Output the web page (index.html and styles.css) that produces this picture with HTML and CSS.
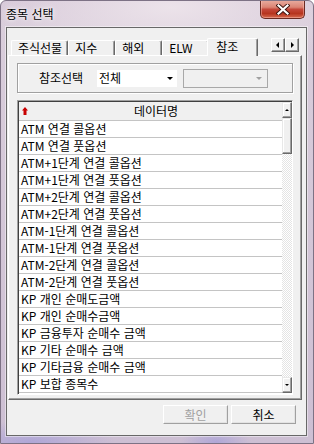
FILE: index.html
```html
<!DOCTYPE html>
<html lang="ko">
<head>
<meta charset="utf-8">
<title>종목 선택</title>
<link rel="stylesheet" href="styles.css">
</head>
<body>
<div class="window">
  <div class="titlebar">
    <span class="title">종목 선택</span>
    <div class="close">
      <svg width="14" height="11" viewBox="0 0 14 11">
        <path d="M2.5 1.5 L11.5 9.5 M11.5 1.5 L2.5 9.5" stroke="#3a1410" stroke-width="4" stroke-linecap="square" fill="none"/>
        <path d="M2.5 1.5 L11.5 9.5 M11.5 1.5 L2.5 9.5" stroke="#ffffff" stroke-width="2.2" stroke-linecap="square" fill="none"/>
      </svg>
    </div>
  </div>
  <div class="client">
    <div class="tabctl">
      <div class="tabstrip">
        <div class="tab">주식선물</div>
        <div class="tab">지수</div>
        <div class="tab">해외</div>
        <div class="tab">ELW</div>
        <div class="tab active">참조</div>
        <div class="spinner">
          <div class="spin-btn"><span class="tri-left"></span></div>
          <div class="spin-btn"><span class="tri-right"></span></div>
        </div>
      </div>
      <div class="panel">
        <div class="group">
          <span class="group-label">참조선택</span>
          <div class="combo">
            <span class="combo-text">전체</span>
            <span class="tri-down"></span>
          </div>
          <div class="combo disabled">
            <span class="combo-text"></span>
            <span class="tri-down light"></span>
          </div>
        </div>
        <div class="list">
          <div class="list-body">
            <div class="list-head">
              <span class="sort">
                <svg width="6" height="8" viewBox="0 0 6 8"><path d="M3 0 L6 3.5 L4.5 3.5 L4.5 8 L1.5 8 L1.5 3.5 L0 3.5 Z" fill="#c80000"/></svg>
              </span>
              <span class="head-text">데이터명</span>
            </div>
            <div class="row">ATM 연결 콜옵션</div>
            <div class="row">ATM 연결 풋옵션</div>
            <div class="row">ATM+1단계 연결 콜옵션</div>
            <div class="row">ATM+1단계 연결 풋옵션</div>
            <div class="row">ATM+2단계 연결 콜옵션</div>
            <div class="row">ATM+2단계 연결 풋옵션</div>
            <div class="row">ATM-1단계 연결 콜옵션</div>
            <div class="row">ATM-1단계 연결 풋옵션</div>
            <div class="row">ATM-2단계 연결 콜옵션</div>
            <div class="row">ATM-2단계 연결 풋옵션</div>
            <div class="row">KP 개인 순매도금액</div>
            <div class="row">KP 개인 순매수금액</div>
            <div class="row">KP 금융투자 순매수 금액</div>
            <div class="row">KP 기타 순매수 금액</div>
            <div class="row">KP 기타금융 순매수 금액</div>
            <div class="row">KP 보합 종목수</div>
          </div>
          <div class="scrollbar">
            <div class="sb-btn"><span class="tri-up"></span></div>
            <div class="sb-thumb"></div>
            <div class="sb-track"></div>
            <div class="sb-btn"><span class="tri-down small"></span></div>
          </div>
        </div>
      </div>
    </div>
    <div class="buttons">
      <div class="btn disabled">확인</div>
      <div class="btn">취소</div>
    </div>
  </div>
</div>
</body>
</html>
```

FILE: styles.css
```css
html, body {
  margin: 0;
  padding: 0;
  background: #ffffff;
}
body {
  font-family: "Noto Sans CJK KR", "Noto Sans", sans-serif;
  font-size: 12px;
  color: #000;
}
.window {
  width: 314px;
  height: 444px;
  box-sizing: border-box;
  display: flex;
  flex-direction: column;
  border: 1px solid #7d7285;
  border-radius: 6px 6px 0 0;
  background:
    radial-gradient(ellipse 120px 30px at 30px 441px, rgba(120,120,220,0.35), transparent 70%),
    radial-gradient(ellipse 50px 20px at 215px 441px, rgba(120,120,220,0.35), transparent 70%),
    radial-gradient(ellipse 190px 60px at 170px 6px, #ece3ea 0%, rgba(236,227,234,0) 100%),
    linear-gradient(to bottom, #d6c8d8 0%, #d9cddb 30px, #cdbfd3 100%);
  overflow: hidden;
}
.titlebar {
  height: 26px;
  display: flex;
  align-items: flex-start;
  padding-left: 5px;
  flex-shrink: 0;
}
.title {
  margin-top: 5px;
  font-size: 12px;
  line-height: 16px;
  color: #000;
  text-shadow: 0 0 6px rgba(255,255,255,0.9), 0 0 3px rgba(255,255,255,0.9);
}
.close {
  margin-left: auto;
  margin-right: 8px;
  margin-top: -1px;
  width: 45px;
  height: 19px;
  box-sizing: border-box;
  border: 1px solid #6a2a22;
  border-top: none;
  border-radius: 0 0 5px 5px;
  background: linear-gradient(to bottom, #e9aea2 0%, #db8474 40%, #c4473a 52%, #b6351f 75%, #d66a4f 100%);
  box-shadow: inset 0 0 0 1px rgba(255,200,190,0.45);
  display: flex;
  align-items: center;
  justify-content: center;
}
.close svg { display: block; }
.client {
  flex: 1;
  margin: 0 6px 7px 5px;
  border: 1px solid #686868;
  background: #f0f0f0;
  display: flex;
  flex-direction: column;
  box-shadow: 0 0 0 1px rgba(255,255,255,0.45);
}
.tabctl {
  margin: 10px 0 0 1px;
  width: 294px;
  display: flex;
  flex-direction: column;
}
.tabstrip {
  height: 17px;
  display: flex;
  align-items: flex-end;
  padding-left: 3px;
  position: relative;
  z-index: 2;
}
.tab {
  height: 15px;
  min-width: 47px;
  box-sizing: border-box;
  padding: 0 5px 0 6px;
  line-height: 14px;
  border-top: 1px solid #ffffff;
  border-left: 1px solid #ffffff;
  border-right: 1px solid #696969;
  box-shadow: inset -1px 0 #a0a0a0;
  border-radius: 2px 2px 0 0;
  background: #f0f0f0;
  white-space: nowrap;
}
.tab.active {
  height: 18px;
  margin: 0 -2px -1px -2px;
  padding: 0 7px 0 8px;
  min-width: 51px;
  line-height: 15px;
  position: relative;
  z-index: 3;
}
.spinner {
  margin-left: auto;
  margin-right: 3px;
  align-self: flex-start;
  margin-top: 0px;
  display: flex;
}
.spin-btn {
  width: 14px;
  height: 14px;
  box-sizing: border-box;
  border: 1px solid;
  border-color: #ffffff #696969 #696969 #ffffff;
  box-shadow: inset -1px -1px #a0a0a0;
  background: #f0f0f0;
  display: flex;
  align-items: center;
  justify-content: center;
}
.tri-left {
  width: 0; height: 0;
  border-top: 3px solid transparent;
  border-bottom: 3px solid transparent;
  border-right: 3px solid #000;
  margin-right: 1px;
}
.tri-right {
  width: 0; height: 0;
  border-top: 3px solid transparent;
  border-bottom: 3px solid transparent;
  border-left: 3px solid #000;
  margin-left: 1px;
}
.panel {
  height: 345px;
  box-sizing: border-box;
  border: 1px solid;
  border-color: #ffffff #696969 #696969 #ffffff;
  box-shadow: inset -1px -1px #a0a0a0;
  padding: 7px 8px 4px 8px;
  display: flex;
  flex-direction: column;
  gap: 7px;
  position: relative;
  z-index: 1;
}
.group {
  height: 30px;
  box-sizing: border-box;
  border: 1px solid #a0a0a0;
  box-shadow: 1px 1px 0 #ffffff, inset 1px 1px 0 #ffffff;
  display: flex;
  align-items: center;
  padding-left: 21px;
  flex-shrink: 0;
}
.group-label {
  width: 48px;
  margin-right: 10px;
  white-space: nowrap;
  line-height: 16px;
}
.combo {
  width: 80px;
  height: 17px;
  box-sizing: border-box;
  background: #ffffff;
  display: flex;
  align-items: center;
  padding: 0 4px 0 2px;
}
.combo-text { flex: 1; line-height: 16px; }
.combo.disabled {
  width: 85px;
  height: 19px;
  margin-left: 6px;
  border: 1px solid #a8a8a8;
  background: #f0f0f0;
  padding-right: 5px;
}
.tri-down {
  width: 0; height: 0;
  border-left: 3px solid transparent;
  border-right: 3px solid transparent;
  border-top: 3px solid #000;
}
.tri-down.light { border-top-color: #a0a0a0; }
.tri-down.small {
  border-left-width: 2px;
  border-right-width: 2px;
  border-top-width: 2px;
}
.tri-up {
  width: 0; height: 0;
  border-left: 2px solid transparent;
  border-right: 2px solid transparent;
  border-bottom: 2px solid #000;
}
.list {
  height: 295px;
  box-sizing: border-box;
  border: 1px solid;
  border-color: #a0a0a0 #ffffff #ffffff #a0a0a0;
  box-shadow: inset 1px 1px #404040;
  background: #ffffff;
  display: flex;
  padding: 1px 0 1px 1px;
  flex-shrink: 0;
}
.list-body {
  flex: 1;
  overflow: hidden;
  display: flex;
  flex-direction: column;
}
.list-head {
  height: 19px;
  flex-shrink: 0;
  box-sizing: border-box;
  border-bottom: 1px solid #c4c4c4;
  background: #f0f0f0;
  display: flex;
  align-items: center;
}
.sort {
  width: 11px;
  padding-left: 3px;
  box-sizing: border-box;
  display: flex;
  align-items: center;
  margin-top: -1px;
}
.sort svg { display: block; }
.head-text {
  flex: 1;
  text-align: center;
  line-height: 16px;
}
.row {
  height: 17px;
  flex-shrink: 0;
  box-sizing: border-box;
  border-bottom: 1px solid #c4c4c4;
  padding-left: 2px;
  line-height: 16px;
  white-space: nowrap;
}
.scrollbar {
  width: 10px;
  display: flex;
  flex-direction: column;
  flex-shrink: 0;
}
.sb-btn, .sb-thumb {
  box-sizing: border-box;
  border: 1px solid;
  border-color: #e8e8e8 #696969 #696969 #e8e8e8;
  box-shadow: inset -1px -1px #a0a0a0, inset 1px 1px #ffffff;
  background: #f0f0f0;
  display: flex;
  align-items: center;
  justify-content: center;
}
.sb-btn { height: 16px; flex-shrink: 0; }
.sb-thumb { height: 36px; flex-shrink: 0; }
.sb-track {
  flex: 1;
  background-color: #f4f4f4;
  background-image: repeating-conic-gradient(#ffffff 0 25%, #e4e4e4 0 50%);
  background-size: 2px 2px;
}
.buttons {
  display: flex;
  justify-content: flex-end;
  gap: 3px;
  margin-top: 5px;
  padding-right: 10px;
}
.btn {
  width: 65px;
  height: 19px;
  box-sizing: border-box;
  border: 1px solid;
  border-color: #ffffff #a0a0a0 #a0a0a0 #ffffff;
  box-shadow: inset -1px -1px #e3e3e3;
  background: #f0f0f0;
  text-align: center;
  line-height: 17px;
}
.btn.disabled { color: #a0a0a0; }
```
